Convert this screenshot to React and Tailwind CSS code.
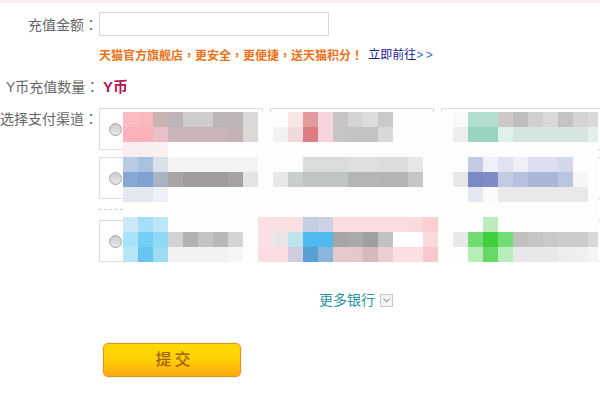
const font = { fontFamily: '"Liberation Sans", "Noto Sans CJK SC", sans-serif' };

// mosaic rows: [row, first column, colours...]; one cell is 15px
const mosaic = [
  [0, 0, '#fbbcc2', '#fbb8bf', '#c9b3b3', '#bdb5b5', '#cfcccc', '#cfcccc', '#bcb5b5', '#bdb5b5', '#dcd8d8'],
  [0, 11, '#f8e6e3', '#e39a9e', '#f6d5da', '#c8c4c4', '#d4d4d4', '#dcdcdc', '#c9c9c9'],
  [0, 22, '#f9f9f9', '#b2dfcf', '#b2dfcf', '#ccc9c6', '#bdbdbd', '#cfcfcf', '#d9d9d9', '#c3c3c3', '#d4d4d4', '#d9d9d9'],
  [1, 0, '#fbb2bb', '#fbb0b9', '#e8c0c6', '#c9b5b8', '#c9b5b8', '#c9b5b8', '#c9b5b8', '#c4b2b4', '#dcd8d8'],
  [1, 10, '#f2f2f2', '#f0d9dc', '#dd7d82', '#f6d5da', '#c6c4c4', '#c3c3c3', '#c3c3c3', '#d8d8d8'],
  [1, 22, '#ededed', '#99d4c0', '#99d4c0', '#e0f0ea', '#d5e6df', '#d5e6df', '#d5e6df', '#d5e6df', '#d5e6df', '#e4eeea'],
  [2, 0, '#f9eeef', '#f9eeef', '#f9f0f0'],
  [3, 0, '#b9cbe2', '#a9c0de', '#d9e0ea', '#f2f3f3', '#f2f3f3', '#f2f3f3', '#f2f3f3', '#f2f3f3', '#f2f3f3'],
  [3, 12, '#d8dcda', '#d8dcda', '#dadcdb', '#dfdfdf', '#dfdfdf', '#dcdcdc', '#dcdcdc', '#e6e6e6'],
  [3, 23, '#c5cae4', '#f0f1f8', '#dfe2f1', '#eeeff7', '#dcdff0', '#dcdff0', '#d3d7ec'],
  [4, 0, '#88a8d4', '#7fa2d2', '#aab3c2', '#a9a5a5', '#a09c9c', '#a09c9c', '#a09c9c', '#a5a2a2', '#e3e3e3'],
  [4, 10, '#e8e8e8', '#c8cecb', '#bec5c2', '#bec5c2', '#bec5c2', '#b5b5b5', '#b5b5b5', '#b3b3b3', '#b3b3b3', '#c6c6c6'],
  [4, 22, '#e8e8e8', '#7c88c4', '#7e8bc5', '#c3cae2', '#b7c0de', '#a9b6d8', '#a9b6d8', '#bcc5e0', '#f6f6f6'],
  [5, 0, '#e2e7f0', '#e2e7f0', '#eef0f5'],
  [5, 23, '#e6e8f1', '#fafafa', '#e9e9e9', '#e9e9e9', '#e9e9e9', '#e9e9e9', '#e9e9e9', '#e9e9e9'],
  [7, 0, '#cbe9f8', '#a4def8', '#bce6f8'],
  [7, 9, '#fadfe3', '#fadfe3', '#fadfe3', '#c2cfe0', '#cdd0e3', '#fadde1', '#fadde1', '#fadde1', '#fadde1', '#fadde1', '#fbdadd', '#f9cfd3'],
  [7, 24, '#bcecbc'],
  [8, 0, '#a8e2f8', '#73d0f4', '#90d8f5', '#d1d1d1', '#b2b2b2', '#c3c3c3', '#b8b8b8', '#d4d4d4'],
  [8, 9, '#fadfe3', '#e8e4e6', '#bde4ee', '#4fbaf0', '#4fbaf0', '#a9a4a4', '#a9a9a9', '#9f9f9f', '#c2c2c2', '#ffffff', '#ffffff', '#fbd9dc'],
  [8, 22, '#e8e8e8', '#72dc72', '#3fd03f', '#74dc74', '#c2bfbf', '#c5c5c5', '#c9c9c9', '#cccccc', '#cccccc', '#d9d9d9'],
  [9, 0, '#b8e6f8', '#66c4ee', '#9cddf6', '#f2f2f2', '#f2f2f2', '#f2f2f2', '#f2f2f2', '#f6f6f6'],
  [9, 9, '#fadde1', '#fadde1', '#d0cde0', '#5a9fd4', '#8ab6dc', '#e6c8ce', '#e2c8cc', '#d8b8be', '#eccdd2', '#fbdfe2', '#fbdfe2', '#f9c8ce'],
  [9, 23, '#b8ecb8', '#66d866', '#b8ecb8', '#e8e8e8', '#e8e8e8', '#e8e8e8', '#ededed', '#efefef', '#f5f5f5'],
];

function Mosaic() {
  return (
    <svg width="475" height="151" viewBox="0 0 475 151" shapeRendering="crispEdges" className="block">
      {mosaic.map(([row, col, ...colors]) =>
        colors.map((c, i) => (
          <rect key={row + '-' + col + '-' + i} x={(col + i) * 15} y={row * 15} width="15" height="15" fill={c} />
        ))
      )}
    </svg>
  );
}

// the reference sets its punctuation centred in the cell, which the TC font does
function P({ children }) {
  return <span className="font-['Noto_Sans_CJK_TC']">{children}</span>;
}

function Card() {
  return (
    <div className="w-[164px] h-[42px] shrink-0 border border-[#dcdcdc] flex items-center pl-[9px]">
      <span className="w-[13px] h-[13px] rounded-full border border-[#a8a8a8] bg-gradient-to-b from-[#cfcfcf] to-[#e8e8e8]"></span>
    </div>
  );
}

function CardRow({ className }) {
  return (
    <div className={'flex gap-[7px] ' + className}>
      <Card />
      <Card />
      <Card />
    </div>
  );
}

export default function App() {
  return (
    <div className="w-[600px] h-[400px] overflow-hidden bg-white text-[14px] text-[#666666]" style={font}>
      <div className="h-[3px] bg-[#fdecef]"></div>

      <div className="flex mt-[9px] h-[24px]">
        <div className="w-[99px] shrink-0 text-right pr-[1px] leading-[24px]">充值金额<P>：</P></div>
        <div className="w-[230px] h-[24px] border border-[#d8d8d8] bg-white"></div>
      </div>

      <div className="flex mt-[11px] ml-[99px] h-[16px] items-center text-[12px] leading-[16px] whitespace-nowrap">
        <span className="font-bold text-[#e8731a]">
          天猫官方旗舰店<P>，</P>更安全<P>，</P>更便捷<P>，</P>送天猫积分<P>！</P>
        </span>
        <a className="ml-[5px] text-[#1a1a9a]">立即前往<span className="text-[#3a6fd0] tracking-[2.5px]">&gt;&gt;</span></a>
      </div>

      <div className="flex mt-[15px] h-[18px] items-center whitespace-nowrap">
        <div className="w-[103px] shrink-0 pl-[6px]">Y币充值数量<P>：</P></div>
        <span className="font-bold text-[15px] text-[#b01858]">Y币</span>
      </div>

      <div className="flex mt-[12px]">
        <div className="w-[99px] shrink-0 whitespace-nowrap leading-[20px]">选择支付渠道<P>：</P></div>
        <div className="relative w-[501px] h-[156px]">
          <CardRow className="" />
          <CardRow className="mt-[7px]" />
          <div className="w-[24px] mt-[10px] border-t border-dashed border-[#cccccc]"></div>
          <CardRow className="mt-[10px]" />
          <div className="absolute left-[24px] top-[4px] bg-[#fdfdfd]">
            <Mosaic />
          </div>
        </div>
      </div>

      <div className="flex items-center mt-[28px] ml-[319px] h-[16px] gap-[5px]">
        <a className="text-[#2a93a8] leading-[16px]">更多银行</a>
        <span className="w-[13px] h-[13px] border border-[#c8c8c8] bg-[#f4f4f4] flex items-center justify-center">
          <svg width="7" height="5" viewBox="0 0 7 5" fill="none" stroke="#666666" strokeWidth="1">
            <path d="M0.5 0.8 L3.5 3.8 L6.5 0.8" />
          </svg>
        </span>
      </div>

      <button className="block mt-[35px] ml-[103px] w-[138px] h-[34px] pl-[5px] rounded-[5px] border border-[#d8952a] bg-gradient-to-b from-[#ffd800] via-[#ffcf05] to-[#ffa811] shadow-[0_0_2px_rgba(216,149,42,0.5)] text-[16px] font-medium text-[#a8630a] tracking-[3px]">
        提交
      </button>
    </div>
  );
}
